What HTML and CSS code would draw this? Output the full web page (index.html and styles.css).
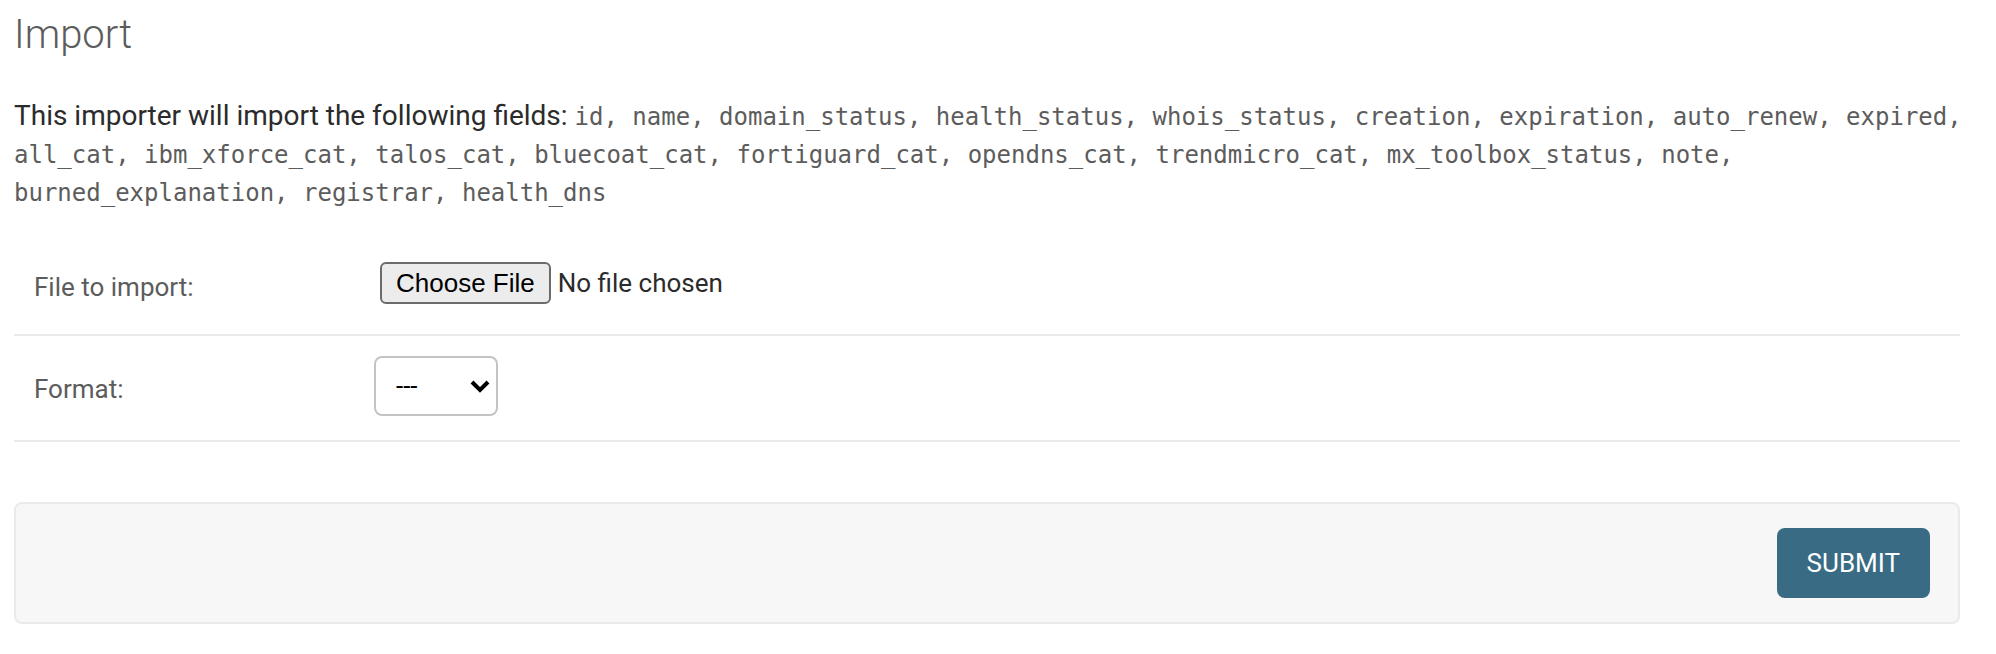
FILE: index.html
```html
<!DOCTYPE html>
<html lang="en">
<head>
<meta charset="utf-8">
<title>Import</title>
<link rel="stylesheet" href="styles.css">
</head>
<body>
<main class="content">
<h1 class="title">Import</h1>
<form class="import-form">
<p class="fields">This importer will import the following fields: <code class="field-list">id, name, domain_status, health_status, whois_status, creation, expiration, auto_renew, expired, all_cat, ibm_xforce_cat, talos_cat, bluecoat_cat, fortiguard_cat, opendns_cat, trendmicro_cat, mx_toolbox_status, note, burned_explanation, registrar, health_dns</code></p>
<div class="form-row file-row">
<label class="label" for="import-file">File to import:</label>
<input class="file" type="file" id="import-file">
</div>
<div class="form-row format-row">
<label class="label" for="format">Format:</label>
<span class="select-wrap">
<select class="select" id="format"><option>---</option><option>csv</option></select>
<svg class="chevron" viewBox="0 0 20 14" aria-hidden="true"><path d="M2 2l8 8 8-8" fill="none" stroke="#000" stroke-width="4"/></svg>
</span>
</div>
<div class="submit-row"><button class="submit" type="submit">SUBMIT</button></div>
</form>
</main>
</body>
</html>
```
FILE: styles.css
```css
* { box-sizing: border-box; }
body { margin: 0; background: #fff; color: #2b2b2b; font-family: Roboto, "Liberation Sans", sans-serif; font-size: 26px; }
.content { padding: 13px 36px 30px 14px; }
.title { margin: 0 0 40px; font-size: 40px; line-height: 44px; font-weight: 300; color: #5c5c5c; }
.fields { margin: 0 -12px 0 0; font-size: 28px; line-height: 38px; }
.field-list { font-family: "DejaVu Sans Mono", monospace; font-size: 24px; line-height: 24px; color: #5c5c5c; }
.form-row { display: flex; align-items: flex-start; padding: 20px 20px 24px; border-bottom: 2px solid #eaeaea; }
.file-row { margin-top: 23px; padding-bottom: 22px; }
.label { width: 340px; padding: 18px 0 10px; line-height: 30px; color: #5c5c5c; }
.file { margin: 8px 0 0 6px; color: #2b2b2b; font: 26px Roboto, sans-serif; }
.file::file-selector-button { font: 26px "Liberation Sans", sans-serif; height: 42px; border: 2px solid #6b6b6b; border-radius: 6px; background: #ececec; color: #000; padding: 0 14px; margin-right: 7px; }
.select-wrap { position: relative; width: 124px; }
.select { display: block; appearance: none; width: 100%; height: 60px; border: 2px solid #c4c4c4; border-radius: 8px; background: #fff; color: #000; padding: 0 20px; font: 26px Roboto, sans-serif; }
.chevron { position: absolute; right: 8px; top: 24px; width: 20px; height: 14px; pointer-events: none; }
.submit-row { display: flex; justify-content: flex-end; margin-top: 60px; padding: 24px 28px; border: 2px solid #eaeaea; border-radius: 8px; background: #f7f7f7; }
.submit { height: 70px; padding: 0 30px; border: 0; border-radius: 8px; background: #396b84; color: #fff; font: 26px Roboto, sans-serif; }
```
